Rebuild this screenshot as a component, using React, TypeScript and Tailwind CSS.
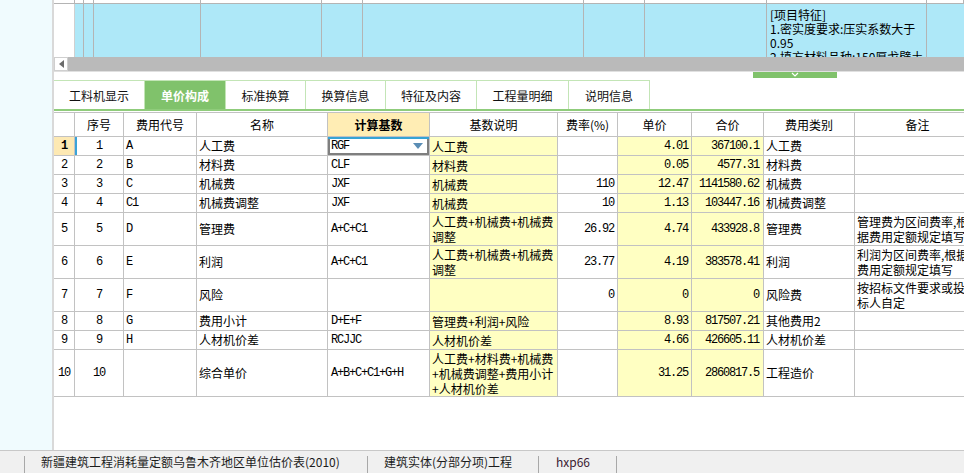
import React from "react";

const cjk = "font-['Noto_Sans_CJK_SC',sans-serif]";
const mono = "font-['Liberation_Mono','Noto_Sans_CJK_SC',monospace] text-[12px] tracking-[-1.2px]";
const line = "border-[#c2c2c2]";
const cols =
  "grid-cols-[21px_49px_73px_131px_102px_128px_60px_74px_72px_91px_140px]";
const upperCols =
  "grid-cols-[21px_9px_10px_107px_121px_41px_221px_61px_122px_160px_1fr]";

type RowData = {
  h: string;
  no: string;
  code: string;
  name: string;
  base: string;
  desc: string[];
  rate: string;
  price: string;
  total: string;
  kind: string;
  note: string[];
};

const rows: RowData[] = [
  { h: "h-[19px]", no: "1", code: "A", name: "人工费", base: "RGF", desc: ["人工费"], rate: "", price: "4.01", total: "367100.1", kind: "人工费", note: [] },
  { h: "h-[19px]", no: "2", code: "B", name: "材料费", base: "CLF", desc: ["材料费"], rate: "", price: "0.05", total: "4577.31", kind: "材料费", note: [] },
  { h: "h-[19px]", no: "3", code: "C", name: "机械费", base: "JXF", desc: ["机械费"], rate: "110", price: "12.47", total: "1141580.62", kind: "机械费", note: [] },
  { h: "h-[19px]", no: "4", code: "C1", name: "机械费调整", base: "JXF", desc: ["机械费"], rate: "10", price: "1.13", total: "103447.16", kind: "机械费调整", note: [] },
  { h: "h-[33px]", no: "5", code: "D", name: "管理费", base: "A+C+C1", desc: ["人工费+机械费+机械费", "调整"], rate: "26.92", price: "4.74", total: "433928.8", kind: "管理费", note: ["管理费为区间费率,根", "据费用定额规定填写"] },
  { h: "h-[33px]", no: "6", code: "E", name: "利润", base: "A+C+C1", desc: ["人工费+机械费+机械费", "调整"], rate: "23.77", price: "4.19", total: "383578.41", kind: "利润", note: ["利润为区间费率,根据", "费用定额规定填写"] },
  { h: "h-[33px]", no: "7", code: "F", name: "风险", base: "", desc: [], rate: "0", price: "0", total: "0", kind: "风险费", note: ["按招标文件要求或投", "标人自定"] },
  { h: "h-[19px]", no: "8", code: "G", name: "费用小计", base: "D+E+F", desc: ["管理费+利润+风险"], rate: "", price: "8.93", total: "817507.21", kind: "其他费用2", note: [] },
  { h: "h-[19px]", no: "9", code: "H", name: "人材机价差", base: "RCJJC", desc: ["人材机价差"], rate: "", price: "4.66", total: "426605.11", kind: "人材机价差", note: [] },
  { h: "h-[47px]", no: "10", code: "", name: "综合单价", base: "A+B+C+C1+G+H", desc: ["人工费+材料费+机械费", "+机械费调整+费用小计", "+人材机价差"], rate: "", price: "31.25", total: "2860817.5", kind: "工程造价", note: [] },
];

const tabs = ["工料机显示", "单价构成", "标准换算", "换算信息", "特征及内容", "工程量明细", "说明信息"];
const tabW = ["w-[91px]", "w-[81px]", "w-[80px]", "w-[80px]", "w-[91px]", "w-[92px]", "w-[81px]"];

function Cell({ className = "", children }: { className?: string; children?: React.ReactNode }) {
  return (
    <div className={`border-r border-b ${line} flex items-center overflow-hidden whitespace-nowrap ${className}`}>
      {children}
    </div>
  );
}

function Lines({ items }: { items: string[] }) {
  return (
    <div className={`${cjk} text-[12px] leading-[15px]`}>
      {items.map((t) => (
        <div key={t}>{t}</div>
      ))}
    </div>
  );
}

export default function App() {
  return (
    <div className="w-[964px] h-[473px] overflow-hidden bg-white text-black flex flex-col">
      <div className="h-[450px] flex">
        {/* left panel */}
        <div className="w-[54px] shrink-0 bg-[#f0fbfe] border-r-2 border-[#d9d9d9]" />

        <div className="flex-1 min-w-0 flex flex-col">
          {/* upper list */}
          <div className="h-[57px] flex flex-col">
            <div className={`h-[4px] grid ${upperCols} border-b border-[#b4b4b4]`}>
              {Array.from({ length: 11 }).map((_, i) => (
                <div key={i} className="border-r border-[#b4b4b4]" />
              ))}
            </div>
            <div className={`flex-1 grid ${upperCols} overflow-hidden`}>
              <div className="bg-white border-r border-[#d0d0d0]" />
              {Array.from({ length: 8 }).map((_, i) => (
                <div key={i} className="bg-[#aee8f8] border-r border-[#b4b4b4]" />
              ))}
              <div className={`bg-[#aee8f8] border-r border-[#b4b4b4] pl-[3px] pt-[4px] ${cjk} text-[12px] leading-[14px] whitespace-nowrap overflow-hidden`}>
                <div>[项目特征]</div>
                <div>1.密实度要求:压实系数大于</div>
                <div>0.95</div>
                <div>2.填方材料品种:150厚戈壁土</div>
              </div>
              <div className="bg-[#aee8f8]" />
            </div>
          </div>

          {/* horizontal scrollbar */}
          <div className="h-[14px] bg-[#bababa] flex">
            <div className="w-[14px] h-full bg-white border border-[#cfcfcf] flex items-center justify-center">
              <svg width="5" height="8" viewBox="0 0 5 8">
                <polygon points="5,0 5,8 0,4" fill="#6b6b6b" />
              </svg>
            </div>
          </div>
          <div className="h-[9px] border-t border-[#e0e0e0]">
            <div className="ml-[699px] w-[84px] h-[6px] bg-[#80c26b] flex justify-center">
              <svg width="8" height="5" viewBox="0 0 8 5">
                <polyline points="1,1 4,4 7,1" fill="none" stroke="#ffffff" strokeWidth="1.2" />
              </svg>
            </div>
          </div>

          {/* tabs */}
          <div className="h-[29px] flex">
            {tabs.map((t, i) => (
              <div
                key={t}
                className={`${tabW[i]} pt-[2px] flex items-center justify-center border-t border-r border-[#c3e5b6] ${cjk} text-[12px] ${
                  i === 1 ? "bg-[#80c26b] text-white font-bold border-[#80c26b]" : "text-[#111]"
                }`}
              >
                {t}
              </div>
            ))}
          </div>
          <div className="h-[2px] bg-[#8fcc7b]" />

          {/* table */}
          <div className="mt-[1px]">
            <div className={`grid ${cols} h-[25px] border-t ${line} ${cjk} text-[12px]`}>
              <Cell />
              <Cell className="justify-center">序号</Cell>
              <Cell className="justify-center">费用代号</Cell>
              <Cell className="justify-center">名称</Cell>
              <Cell className="justify-center bg-[#ffedb4] font-bold">计算基数</Cell>
              <Cell className="justify-center">基数说明</Cell>
              <Cell className="justify-center">费率(%)</Cell>
              <Cell className="justify-center">单价</Cell>
              <Cell className="justify-center">合价</Cell>
              <Cell className="justify-center">费用类别</Cell>
              <Cell className="justify-center pr-[14px]">备注</Cell>
            </div>

            {rows.map((r, i) => (
              <div key={r.no} className={`grid ${cols} ${r.h}`}>
                <Cell className={`justify-center ${mono} ${i === 0 ? "bg-[#fde9b3] font-bold" : ""}`}>{r.no}</Cell>
                <Cell className={`justify-center ${mono} ${i === 0 ? "shadow-[inset_2px_0_0_#3aa3d8]" : ""}`}>{r.no}</Cell>
                <Cell className={`pl-[2px] ${mono}`}>{r.code}</Cell>
                <Cell className={`pl-[2px] ${cjk} text-[12px]`}>{r.name}</Cell>
                <Cell
                  className={`pl-[3px] ${mono} ${
                    i === 0
                      ? "justify-between pr-[6px] shadow-[inset_0_2px_0_#36a3d5,inset_2px_0_0_#7f7f7f,inset_-2px_0_0_#7f7f7f,inset_0_-2px_0_#7f7f7f]"
                      : ""
                  }`}
                >
                  <span>{r.base}</span>
                  {i === 0 && (
                    <svg width="10" height="6" viewBox="0 0 10 6">
                      <polygon points="0,0 10,0 5,6" fill="#5a8db5" />
                    </svg>
                  )}
                </Cell>
                <Cell className="pl-[2px] bg-[#ffffc2]">
                  <Lines items={r.desc} />
                </Cell>
                <Cell className={`justify-end pr-[3px] ${mono}`}>{r.rate}</Cell>
                <Cell className={`justify-end pr-[3px] bg-[#ffffc2] ${mono}`}>{r.price}</Cell>
                <Cell className={`justify-end pr-[4px] bg-[#ffffc2] ${mono}`}>{r.total}</Cell>
                <Cell className={`pl-[2px] ${cjk} text-[12px]`}>{r.kind}</Cell>
                <Cell className="pl-[2px]">
                  <Lines items={r.note} />
                </Cell>
              </div>
            ))}
          </div>
        </div>
      </div>

      {/* status bar */}
      <div className={`h-[23px] bg-[#f0f0f0] border-t border-[#c8c8c8] flex ${cjk} text-[12px] text-[#1c1c1c]`}>
        <div className="w-[24px]" />
        <div className="w-px h-[17px] mt-[5px] bg-[#a8a8a8]" />
        <div className="w-[342px] pl-[16px] flex items-center">新疆建筑工程消耗量定额乌鲁木齐地区单位估价表(2010)</div>
        <div className="w-px h-[17px] mt-[5px] bg-[#a8a8a8]" />
        <div className="w-[170px] pl-[16px] flex items-center">建筑实体(分部分项)工程</div>
        <div className="w-px h-[17px] mt-[5px] bg-[#a8a8a8]" />
        <div className="w-[77px] pl-[17px] flex items-center text-[#3a2030]">hxp66</div>
        <div className="w-px h-[17px] mt-[5px] bg-[#a8a8a8]" />
      </div>
    </div>
  );
}
